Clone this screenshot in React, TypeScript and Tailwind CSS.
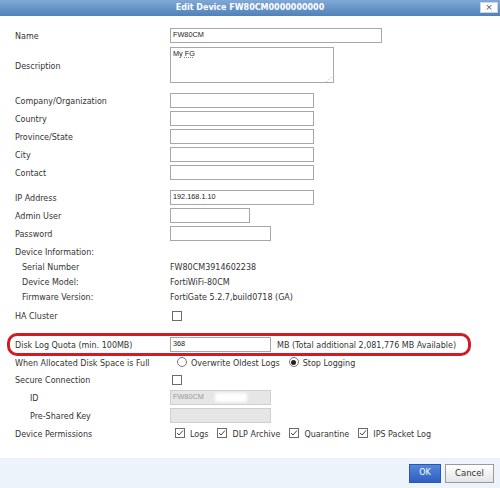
import React from "react";

const labelFont = { fontFamily: '"DejaVu Sans", Verdana, sans-serif' };

function Field({ w, value, disabled }: { w: string; value?: string; disabled?: boolean }) {
  return (
    <div
      className={`${w} h-[15px] border flex items-center px-[2px] text-[7.3px] ${
        disabled ? "bg-[#e6e6e6] border-[#cfcfcf] text-[#9a9a9a]" : "bg-white border-[#a7a7a7] text-[#222]"
      }`}
      style={{ fontFamily: '"Liberation Sans", Arial, sans-serif' }}
    >
      {value}
    </div>
  );
}

function Row({
  label,
  indent = "",
  h = "h-[18px]",
  children,
}: {
  label: string;
  indent?: string;
  h?: string;
  children?: React.ReactNode;
}) {
  return (
    <div className={`flex items-center ${h}`}>
      <div className={`w-[155px] shrink-0 pt-[3px] ${indent}`}>{label}</div>
      <div className="flex items-center">{children}</div>
    </div>
  );
}

function Txt({ children, className = "" }: { children: React.ReactNode; className?: string }) {
  return <span className={`pt-[3px] ${className}`}>{children}</span>;
}

function Box({ checked }: { checked?: boolean }) {
  return (
    <span className="w-[10px] h-[10px] border border-[#6b6b6b] bg-white flex items-center justify-center">
      {checked && (
        <svg width="8" height="8" viewBox="0 0 8 8">
          <path d="M1 4 L3 6 L7 1.5" fill="none" stroke="#444" strokeWidth="1" />
        </svg>
      )}
    </span>
  );
}

function Radio({ checked }: { checked?: boolean }) {
  return (
    <span className="w-[10px] h-[10px] rounded-full border border-[#777] bg-white flex items-center justify-center">
      {checked && <span className="w-[5px] h-[5px] rounded-full bg-[#222]" />}
    </span>
  );
}

export default function App() {
  return (
    <div className="w-[500px] h-[488px] bg-white flex flex-col overflow-hidden text-[8px] text-[#333]" style={labelFont}>
      {/* Title bar */}
      <div className="h-[16px] bg-gradient-to-b from-[#80a9d5] to-[#4f81b9] flex items-center justify-center relative">
        <span className="text-white font-bold text-[8px]">Edit Device FW80CM0000000000</span>
        <span className="absolute right-[2px] top-[2px] w-[18px] h-[11px] bg-white border border-[#c9d6e4] flex items-center justify-center text-[9px] leading-none text-[#555]">
          ×
        </span>
      </div>

      <div className="flex-1 pl-[15px] pt-[10px]">
        <Row label="Name">
          <Field w="w-[212px]" value="FW80CM" />
        </Row>
        <Row label="Description" h="h-[38px] mt-[2px]">
          <div
            className="w-[164px] h-[36px] border border-[#a7a7a7] px-[2px] pt-[1px] text-[7.3px] text-[#222] relative"
            style={{ fontFamily: '"Liberation Sans", Arial, sans-serif' }}
          >
            My <span className="underline decoration-dotted decoration-[#c66] underline-offset-[1px]">FG</span>
            <span className="absolute right-[1px] bottom-[0px] text-[6px] leading-none text-[#aaa]">⋰</span>
          </div>
        </Row>
        <div className="mt-[7px]">
          <Row label="Company/Organization">
            <Field w="w-[144px]" />
          </Row>
          <Row label="Country">
            <Field w="w-[144px]" />
          </Row>
          <Row label="Province/State">
            <Field w="w-[144px]" />
          </Row>
          <Row label="City">
            <Field w="w-[144px]" />
          </Row>
          <Row label="Contact">
            <Field w="w-[144px]" />
          </Row>
        </div>
        <div className="mt-[7px]">
          <Row label="IP Address">
            <Field w="w-[144px]" value="192.168.1.10" />
          </Row>
          <Row label="Admin User">
            <Field w="w-[80px]" />
          </Row>
          <Row label="Password">
            <Field w="w-[101px]" />
          </Row>
        </div>
        <Row label="Device Information:" h="h-[16px] mt-[1px]" />
        <Row label="Serial Number" indent="pl-[7px]" h="h-[15px]">
          <Txt>FW80CM3914602238</Txt>
        </Row>
        <Row label="Device Model:" indent="pl-[7px]" h="h-[15px]">
          <Txt>FortiWiFi-80CM</Txt>
        </Row>
        <Row label="Firmware Version:" indent="pl-[7px]" h="h-[15px]">
          <Txt>FortiGate 5.2.7,build0718 (GA)</Txt>
        </Row>
        <Row label="HA Cluster" h="h-[18px] mt-[2px]">
          <span className="ml-[2px] pt-[1px]">
            <Box />
          </span>
        </Row>

        <div className="relative mt-[11px]">
          <Row label="Disk Log Quota (min. 100MB)">
            <Field w="w-[101px]" value="368" />
            <Txt className="ml-[6px]">MB (Total additional 2,081,776 MB Available)</Txt>
          </Row>
          <div className="absolute -left-[8px] -top-[2px] w-[464px] h-[23px] border-[3px] border-[#d01c24] rounded-[10px]" />
        </div>

        <Row label="When Allocated Disk Space is Full">
          <div className="flex items-center ml-[7px] gap-[4px]">
            <Radio />
            <Txt>Overwrite Oldest Logs</Txt>
          </div>
          <div className="flex items-center ml-[9px] gap-[4px]">
            <Radio checked />
            <Txt>Stop Logging</Txt>
          </div>
        </Row>
        <Row label="Secure Connection" h="h-[17px]">
          <span className="ml-[2px]">
            <Box />
          </span>
        </Row>
        <Row label="ID" indent="pl-[15px]">
          <div className="relative">
            <Field w="w-[101px]" value="FW80CM" disabled />
            <span className="absolute left-[45px] top-[3px] w-[32px] h-[9px] bg-white blur-[1.5px]" />
          </div>
        </Row>
        <Row label="Pre-Shared Key" indent="pl-[15px]">
          <Field w="w-[101px]" disabled />
        </Row>
        <Row label="Device Permissions">
          <div className="flex items-center ml-[5px] gap-[5px]">
            <Box checked />
            <Txt>Logs</Txt>
          </div>
          <div className="flex items-center ml-[9px] gap-[5px]">
            <Box checked />
            <Txt>DLP Archive</Txt>
          </div>
          <div className="flex items-center ml-[9px] gap-[5px]">
            <Box checked />
            <Txt>Quarantine</Txt>
          </div>
          <div className="flex items-center ml-[9px] gap-[5px]">
            <Box checked />
            <Txt>IPS Packet Log</Txt>
          </div>
        </Row>
      </div>

      {/* Footer */}
      <div className="h-[30px] bg-[#edf3fa] flex items-center justify-end pr-[6px] gap-[4px]">
        <button className="w-[32px] h-[19px] border border-[#2c56a8] bg-gradient-to-b from-[#5287dc] to-[#2f5fbf] text-white text-[8px]">
          OK
        </button>
        <button className="w-[49px] h-[19px] border border-[#9a9a9a] bg-gradient-to-b from-white to-[#e4e4e4] text-[#333] text-[8.5px]">
          Cancel
        </button>
      </div>
    </div>
  );
}
